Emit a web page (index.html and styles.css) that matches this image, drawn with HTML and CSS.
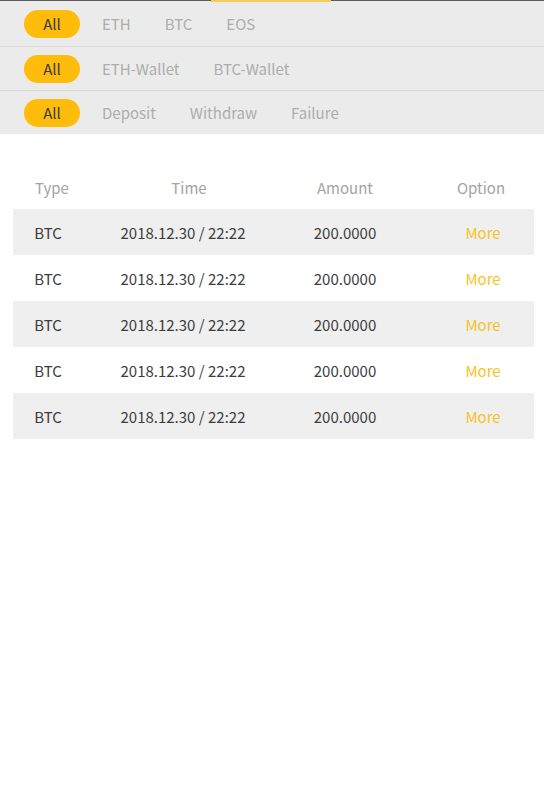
FILE: index.html
```html
<!DOCTYPE html>
<html>
<head>
<meta charset="utf-8">
<link rel="stylesheet" href="styles.css">
</head>
<body>
<div class="topbar"><span class="indicator"></span></div>
<div class="filters">
  <div class="filter-row first">
    <span class="chip active">All</span>
    <span class="chip">ETH</span>
    <span class="chip">BTC</span>
    <span class="chip">EOS</span>
  </div>
  <div class="filter-row">
    <span class="chip active">All</span>
    <span class="chip">ETH-Wallet</span>
    <span class="chip">BTC-Wallet</span>
  </div>
  <div class="filter-row last">
    <span class="chip active">All</span>
    <span class="chip">Deposit</span>
    <span class="chip">Withdraw</span>
    <span class="chip">Failure</span>
  </div>
</div>
<div class="table">
  <div class="row head">
    <span class="c1">Type</span><span class="c2">Time</span><span class="c3">Amount</span><span class="c4">Option</span>
  </div>
  <div class="row stripe">
    <span class="c1">BTC</span><span class="c2">2018.12.30 / 22:22</span><span class="c3">200.0000</span><span class="c4 more">More</span>
  </div>
  <div class="row">
    <span class="c1">BTC</span><span class="c2">2018.12.30 / 22:22</span><span class="c3">200.0000</span><span class="c4 more">More</span>
  </div>
  <div class="row stripe">
    <span class="c1">BTC</span><span class="c2">2018.12.30 / 22:22</span><span class="c3">200.0000</span><span class="c4 more">More</span>
  </div>
  <div class="row">
    <span class="c1">BTC</span><span class="c2">2018.12.30 / 22:22</span><span class="c3">200.0000</span><span class="c4 more">More</span>
  </div>
  <div class="row stripe">
    <span class="c1">BTC</span><span class="c2">2018.12.30 / 22:22</span><span class="c3">200.0000</span><span class="c4 more">More</span>
  </div>
</div>
</body>
</html>
```

FILE: styles.css
```css
* { box-sizing: border-box; }
html, body { margin: 0; padding: 0; background: #ffffff; }
body {
  width: 544px;
  font-family: "Noto Sans CJK SC", "Noto Sans", sans-serif;
  font-size: 15px;
}
.topbar {
  height: 1px;
  background: #5a5a5a;
  position: relative;
}
.indicator {
  position: absolute;
  left: 211px;
  top: 0;
  width: 120px;
  height: 2px;
  background: #f3cf5a;
}
.filters {
  background: #ebebeb;
}
.filter-row {
  height: 44px;
  display: flex;
  align-items: center;
  gap: 34px;
  padding-left: 24px;
  border-bottom: 1px solid #dadada;
}
.filter-row.first {
  height: 46px;
  padding-top: 1px;
}
.filter-row.last {
  height: 43px;
  border-bottom: none;
}
.chip {
  color: #adadad;
  line-height: 28px;
}
.chip.active {
  background: #ffbc0a;
  color: #3a3a3a;
  border-radius: 14px;
  width: 56px;
  text-align: center;
  margin-right: -12px;
}
.table {
  margin: 31px 10px 0 13px;
}
.row {
  display: grid;
  grid-template-columns: 70px 200px 124px 1fr;
  height: 46px;
  align-items: center;
  color: #3d3d3d;
}
.row.head {
  height: 44px;
  color: #a3a3a3;
}
.row.stripe { background: #efefef; }
.row span { text-align: center; }
.row .c4 { padding-left: 25px; }
.row.head .c1 { padding-left: 8px; }
.row.head .c2 { padding-left: 12px; }
.row.head .c4 { padding-left: 21px; }
.more { color: #f7c41e; }
```
